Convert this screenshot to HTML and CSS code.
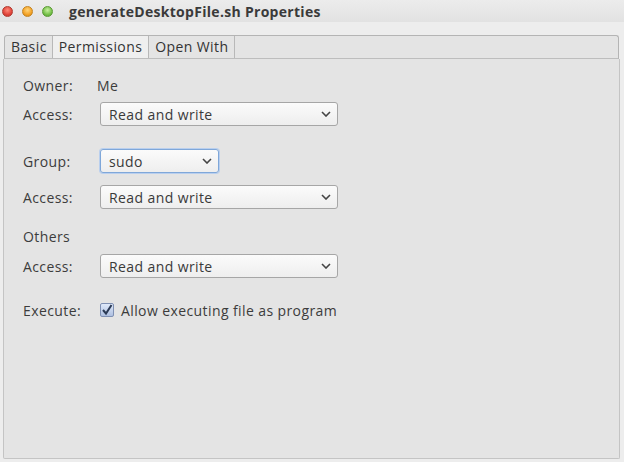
FILE: index.html
```html
<!DOCTYPE html>
<html>
<head>
<meta charset="utf-8">
<link rel="stylesheet" href="styles.css">
</head>
<body>
<div class="window">
  <div class="titlebar">
    <div class="lights">
      <span class="light red"></span>
      <span class="light orange"></span>
      <span class="light green"></span>
    </div>
    <div class="title">generateDesktopFile.sh Properties</div>
  </div>
  <div class="body">
    <div class="tabs">
      <div class="tab first">Basic</div>
      <div class="tab active">Permissions</div>
      <div class="tab">Open With</div>
    </div>
    <div class="panel">
      <div class="row r-owner"><span class="label">Owner:</span><span class="value">Me</span></div>
      <div class="row r-access1"><span class="label">Access:</span><div class="select wide"><span>Read and write</span><svg class="chev" viewBox="0 0 10 6" width="10" height="6"><path d="M1 1 L5 5 L9 1" fill="none" stroke="#444" stroke-width="1.6"/></svg></div></div>
      <div class="row r-group"><span class="label">Group:</span><div class="select narrow focus"><span>sudo</span><svg class="chev" viewBox="0 0 10 6" width="10" height="6"><path d="M1 1 L5 5 L9 1" fill="none" stroke="#444" stroke-width="1.6"/></svg></div></div>
      <div class="row r-access2"><span class="label">Access:</span><div class="select wide"><span>Read and write</span><svg class="chev" viewBox="0 0 10 6" width="10" height="6"><path d="M1 1 L5 5 L9 1" fill="none" stroke="#444" stroke-width="1.6"/></svg></div></div>
      <div class="row r-others"><span class="label">Others</span></div>
      <div class="row r-access3"><span class="label">Access:</span><div class="select wide"><span>Read and write</span><svg class="chev" viewBox="0 0 10 6" width="10" height="6"><path d="M1 1 L5 5 L9 1" fill="none" stroke="#444" stroke-width="1.6"/></svg></div></div>
      <div class="row r-exec"><span class="label">Execute:</span><span class="check"><svg viewBox="0 0 14 14" width="14" height="14"><path d="M3 7 L6 10.5 L11.5 2" fill="none" stroke="#2b3a55" stroke-width="2"/></svg></span><span class="checktext">Allow executing file as program</span></div>
    </div>
  </div>
</div>
</body>
</html>
```
FILE: styles.css
```css
html, body { margin: 0; padding: 0; }
body {
  width: 624px; height: 462px; overflow: hidden;
  font-family: "Open Sans", "Noto Sans", sans-serif;
  font-size: 14px; letter-spacing: 0.4px; color: #3c3c3c;
  background: #ededed;
}
.window { width: 624px; height: 462px; display: flex; flex-direction: column; }
.titlebar {
  height: 22px; display: flex; align-items: center;
  background: linear-gradient(#ececec, #e2e2e2);
  box-sizing: border-box;
}
.lights { display: flex; gap: 9px; padding-left: 2px; width: 67px; }
.light { width: 11px; height: 11px; border-radius: 50%; display: block; box-sizing: border-box; }
.red { background: radial-gradient(circle at 50% 35%, #ff8a7a, #e0443a 60%, #b8302a); border: 1px solid #b03a30; }
.orange { background: radial-gradient(circle at 50% 35%, #ffd47a, #f3a226 60%, #c97d10); border: 1px solid #c58420; }
.green { background: radial-gradient(circle at 50% 35%, #c8f0a0, #76c14a 60%, #4f9a2a); border: 1px solid #5a9a35; }
.title { font-weight: bold; font-size: 14px; letter-spacing: 0.3px; color: #3a3a3a; }
.body { flex: 1; display: flex; flex-direction: column; padding: 13px 4px 3px 3px; }
.tabs {
  display: flex; height: 24px; box-sizing: border-box;
  margin-left: 1px; margin-right: 1px;
  border: 1px solid #b4b4b4; border-bottom-color: #bdbdbd; border-radius: 3px 3px 0 0;
  background: #e4e4e4;
}
.tab {
  padding: 0 6px; line-height: 22px; border-right: 1px solid #b8b8b8; color: #333;
}
.tab.first { padding: 0 5px 0 6px; }
.tab.active { background: #efefef; }
.panel {
  flex: 1; background: #e4e4e4;
  border: 1px solid #c4c4c4; border-top: none;
  border-radius: 0 0 2px 2px;
  padding: 0 0 0 19px;
}
.row { display: flex; align-items: center; height: 24px; }
.label { width: 77px; flex: none; }
.value { margin-left: -3px; }
.r-owner { margin-top: 14px; }
.r-access1 { margin-top: 5px; }
.r-group { margin-top: 23px; }
.r-access2 { margin-top: 12px; }
.r-others { margin-top: 15px; }
.r-access3 { margin-top: 6px; }
.r-exec { margin-top: 20px; }
.select {
  height: 24px; box-sizing: border-box;
  border: 1px solid #a6a6a6; border-radius: 3px;
  background: linear-gradient(#fbfbfb, #eeeeee);
  display: flex; align-items: center; justify-content: space-between;
  padding: 0 6px 0 8px; color: #3a3a3a;
}
.select.wide { width: 238px; }
.select.narrow { width: 119px; }
.select.focus { border-color: #7fa7d9; box-shadow: 0 0 0 1px #b9cfee; }
.check {
  width: 14px; height: 14px; box-sizing: border-box; margin-left: 0;
  border: 1px solid #7f90b3; border-radius: 2px;
  background: linear-gradient(#dfe9fa, #aebfe0);
  display: flex;
}
.check svg { display: block; margin: -1px; }
.checktext { margin-left: 7px; }
```
